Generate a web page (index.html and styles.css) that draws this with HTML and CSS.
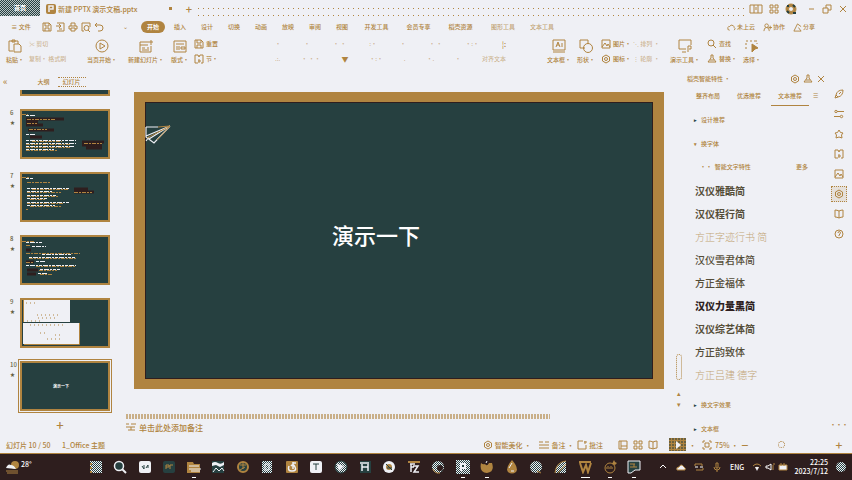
FILE: index.html
```html
<!DOCTYPE html>
<html lang="zh-CN">
<head>
<meta charset="utf-8">
<title>新建 PPTX 演示文稿.pptx</title>
<link rel="stylesheet" href="styles.css">
</head>
<body>
<svg class="defs" aria-hidden="true">
  <defs>
    <pattern id="chk" width="2" height="2" patternUnits="userSpaceOnUse"><g stroke="none"><path fill="#264040" d="M0 0h2v2H0z"/><path fill="#eff0f5" d="M0 0h1v1H0zM1 1h1v1H1z"/></g></pattern>
    <symbol id="save" viewBox="0 0 10 10"><path d="M1 1h6l2 2v6H1zM3 1v3h4V1M3 9V6h4v3"/></symbol>
    <symbol id="export" viewBox="0 0 10 10"><path d="M2 1h7v8H2M1 4h4M4 2l2 2-2 2M4 7h3"/></symbol>
    <symbol id="print" viewBox="0 0 10 10"><path d="M3 4V1h4v3M3 7H1V4h8v3H7M3 6h4v3H3z"/></symbol>
    <symbol id="preview" viewBox="0 0 10 10"><path d="M3 9H1V1h8v4M7 8l2 2"/><circle cx="5.500" cy="6" r="2.500"/></symbol>
    <symbol id="undo" viewBox="0 0 10 10"><path d="M3 1 1 3l2 2M1 3h5q3 0 3 3T6 9H4"/></symbol>
    <symbol id="gear" viewBox="0 0 10 10"><path d="m5 1 3.500 2v4L5 9 1.500 7V3z"/><circle cx="5" cy="5" r="1.500"/></symbol>
    <symbol id="pin" viewBox="0 0 10 10"><path d="M4 1h2v3l3 4H1l3-4zM3 6h4"/></symbol>
    <symbol id="close" viewBox="0 0 10 10"><path d="m2 2 6 6M8 2 2 8"/></symbol>
    <symbol id="img" viewBox="0 0 10 10"><path d="M1 1h8v8H1zM1 8l3-4 2 3 1-2 2 3"/></symbol>
    <symbol id="book" viewBox="0 0 10 10"><path d="M5 2v7M5 2Q3 1 1 1v7q2 0 4 1 2-1 4-1V1Q7 1 5 2"/></symbol>
    <symbol id="grid" viewBox="0 0 10 10"><path d="M1 1h3v3H1zM6 1h3v3H6zM1 6h3v3H1zM6 6h3v3H6z"/></symbol>
    <symbol id="cloud" viewBox="0 0 10 10"><path d="M3 8Q0 8 1 5q1-2 2-1 1-3 4-1 1 1 1 2 2 1 0 3"/></symbol>
    <symbol id="user" viewBox="0 0 10 10"><circle cx="4" cy="3" r="2"/><path d="M1 9q0-4 3-4t3 4M8 3v4M6 5h4"/></symbol>
    <symbol id="share" viewBox="0 0 10 10"><path d="M5 1 1 9h8L6 5M5 1l4 3"/></symbol>
    <symbol id="find" viewBox="0 0 10 10"><circle cx="4" cy="4" r="3"/><path d="m6 6 3 3"/></symbol>
    <symbol id="star" viewBox="0 0 10 10"><path d="m5 1 1.500 2.500L9 4 7.500 6 8 9 5 8 2 9l.5-3L1 4l2.500-.5z"/></symbol>
    <symbol id="sliders" viewBox="0 0 10 10"><path d="M3 2.500h7M0 7.500h6"/><circle cx="2" cy="2.500" r="1.200"/><circle cx="7.500" cy="7.500" r="1.200"/></symbol>
    <symbol id="rocket" viewBox="0 0 10 10"><path d="M2 6q1-5 7-5 0 6-5 7zM2 6 1 9l3-1M5 5l2-2"/></symbol>
    <symbol id="doc" viewBox="0 0 10 10"><path d="M1 9V1h3l1 2 1-2h3v8H7M1 9h3M4 7h3M5 5v4"/></symbol>
    <symbol id="help" viewBox="0 0 10 10"><circle cx="5" cy="5" r="4"/><path d="M4 4q0-1.500 1.500-1.500T6 5L5 6v1"/></symbol>
  </defs>
</svg>

<header class="titlebar">
  <button class="home">首页</button>
  <div class="doc-tab">
    <svg class="p-logo" viewBox="0 0 10 10"><rect width="10" height="10" rx="2" fill="#b08440"/><path d="M3 8V2h4v3H4" fill="none" stroke="#eff0f5" stroke-width="1.500"/></svg>
    <span class="doc-name">新建 PPTX 演示文稿.pptx</span><i class="dot"></i>
  </div>
  <button class="new-tab" aria-label="新建标签">+</button>
  <div class="dots-fill"></div>
  <div class="window-tools">
    <button aria-label="分屏"><svg class="wide" viewBox="0 0 14 10"><path d="M1 1h12v8H1zM5 1v8M9 1v8M7 3v3"/></svg></button>
    <button aria-label="应用"><svg><use href="#grid"/></svg></button>
    <button aria-label="账户"><svg class="avatar" viewBox="0 0 12 12"><circle cx="6" cy="6" r="5" fill="#b08440"/><circle cx="6" cy="6" r="2.500" fill="#eff0f5"/><path d="M2 3h2M8 2l2 2M2 8l2 2M8 10h3" stroke="#264040" stroke-width="2"/></svg></button>
    <button aria-label="最小化"><svg viewBox="0 0 10 10"><path d="M3 5h5"/></svg></button>
    <button aria-label="还原"><svg viewBox="0 0 10 10"><path d="M1 4h5v5H1zM4 4V1h5v5H6"/></svg></button>
    <button aria-label="关闭"><svg><use href="#close"/></svg></button>
  </div>
</header>

<nav class="menu">
  <button class="file">≡ 文件</button>
  <div class="quick">
    <button aria-label="保存"><svg><use href="#save"/></svg></button>
    <button aria-label="输出"><svg><use href="#export"/></svg></button>
    <button aria-label="打印"><svg><use href="#print"/></svg></button>
    <button aria-label="预览"><svg><use href="#preview"/></svg></button>
    <button aria-label="撤销"><svg><use href="#undo"/></svg></button>
    <button class="more" aria-label="更多">⌄</button>
  </div>
  <div class="tabs">
    <button class="active">开始</button><button>插入</button><button>设计</button><button>切换</button><button>动画</button><button>放映</button><button>审阅</button><button>视图</button><button class="long">开发工具</button><button class="long">会员专享</button><button class="long">稻壳资源</button><button class="context">图形工具</button><button class="context">文本工具</button>
  </div>
  <div class="share">
    <button><svg><use href="#cloud"/></svg>未上云</button>
    <button><svg><use href="#user"/></svg>协作</button>
    <button><svg><use href="#share"/></svg>分享</button>
  </div>
</nav>

<section class="ribbon">
  <button class="tool"><svg viewBox="0 0 14 14"><path d="M5 12H1V2h9v3M4 1h3v2H4zM6 5h5l2 2v6H6z"/></svg>粘贴·</button>
  <div class="stack faint"><button>✂ 剪切</button><button>复制· 格式刷</button></div>
  <button class="tool"><svg viewBox="0 0 14 14"><circle cx="7" cy="7" r="6"/><path d="M5 4v6l5-3z"/></svg>当页开始·</button>
  <button class="tool"><svg viewBox="0 0 14 14"><path d="M9 3H1v10h11V7M1 6h8M12 1v5M9 3h5M3 9h3M8 9h2M3 11h7"/></svg>新建幻灯片·</button>
  <button class="tool"><svg viewBox="0 0 14 14"><path d="M1 2h12v11H1zM3 5h8M3 8h4M3 10h4M8 8h4v2H8z"/></svg>版式·</button>
  <div class="stack"><button><svg><use href="#save"/></svg>重置</button><button><svg><use href="#doc"/></svg>节·</button></div>
  <div class="format faint">
    <div><span>·</span><span>·</span><span>· ·</span><span>:·</span><span>·</span><span>· ·</span><span>·:·</span><span class="strong">¦:</span></div>
    <div><span>.:.</span><span>· ··</span><button class="strong" aria-label="文字颜色">▼</button><span>·:·</span><span>.</span><span>·.</span><span>·</span><span>对齐文本</span></div>
  </div>
  <button class="tool"><svg viewBox="0 0 14 14"><path d="M1 1h12v10H1zM1 13h12M4 8l2-5 2 5M5 6h2M10 4v4"/></svg>文本框·</button>
  <button class="tool"><svg viewBox="0 0 14 14"><path d="M6 9H1V1h8v4"/><circle cx="9" cy="9" r="4.500"/></svg>形状·</button>
  <div class="stack"><button><svg><use href="#img"/></svg>图片·</button><button><svg><use href="#gear"/></svg>图标·</button></div>
  <div class="stack faint"><button>⋱ 排列 ·</button><button>⋮ 轮廓 ·</button></div>
  <button class="tool"><svg viewBox="0 0 14 14"><path d="M8 10H1V1h12v5M4 13h4M10 13V7h3v3h-2"/></svg>演示工具·</button>
  <div class="stack"><button><svg><use href="#find"/></svg>查找</button><button><svg><use href="#pin"/></svg>替换·</button></div>
  <button class="tool"><svg viewBox="0 0 14 14"><path d="M1 2h2M5 2h2M9 2h3M1 4v2M1 8v2M12 4v1" /><path d="m7 5 6 4-3 1-3 3z" fill="#b08440"/></svg>选择·</button>
</section>

<main class="workspace">
  <aside class="outline">
    <div class="outline-head"><button aria-label="收起">«</button><button class="push">大纲</button><button class="chosen">幻灯片</button></div>
    <ol class="thumbs">
      <li><div class="thumb cut"></div></li>
      <li><span class="no">6<b>★</b></span><div class="thumb"><svg viewBox="0 0 86 46"><g stroke="#2e1e1e" stroke-width="3"><path d="M4 8h38M4 11h12M4 14h17M6 19h26M8 26h12M60 31h22M60 34h20M64 37h16"/></g><g class="w"><path d="M4 4.500h9M4 23.500h10M4 29.500h50M4 32.500h50M4 35.500h48M4 38.500h28"/></g><g class="o"><path d="M0 3.500h6M5 8.500h28M5 12.500h10M7 18.500h18M10 30.500h30M4 33.500h44M4 36.500h44M4 39.500h32M62 32.500h18"/></g></svg></div></li>
      <li><span class="no">7<b>★</b></span><div class="thumb"><svg viewBox="0 0 86 46"><g stroke="#2e1e1e" stroke-width="3"><path d="M52 15h14M52 18h20"/></g><g class="w"><path d="M4 4.500h7M5 14.500h42M5 17.500h26M5 21.500h30M5 24.500h20M5 28.500h42M5 31.500h28"/></g><g class="o"><path d="M0 3.500h8M5 8.500h24M10 15.500h36M5 18.500h34M5 22.500h32M8 25.500h16M5 29.500h36M8 32.500h32M52 18.500h18M4 35.500h2"/></g></svg></div></li>
      <li><span class="no">8<b>★</b></span><div class="thumb"><svg viewBox="0 0 86 46"><g stroke="#2e1e1e" stroke-width="3"><path d="M4 13h5M4 25h8M5 33h11M5 37h9"/></g><g class="w"><path d="M4 5.500h16M10 9.500h14M20 17.500h30M7 20.500h46M14 24.500h9M4 28.500h50M18 32.500h20M16 36.500h10"/></g><g class="o"><path d="M0 4.500h12M4 8.500h4M4 16.500h54M7 21.500h48M4 25.500h7M14 29.500h40M17 33.500h18M18 37.500h12"/></g></svg></div></li>
      <li><span class="no">9<b>★</b></span><div class="thumb"><svg viewBox="0 0 86 46"><path fill="#eff0f5" stroke="none" d="M1 0h47v22H1zM1 23h57v21H1z"/><path d="M1.500 0v22M2 44.500h55.500V23"/><g stroke-dasharray="1 3"><path d="M4 3h10M15 15h22M16 18h20M5 21h14M8 25h34M18 33h8M33 35h8M25 39h16"/></g></svg></div></li>
      <li><span class="no">10<b>★</b></span><div class="thumb current"><span>演示一下</span></div></li>
    </ol>
    <button class="add" aria-label="新建幻灯片">+</button>
  </aside>

  <section class="stage">
    <div class="slide">
      <svg class="plane" viewBox="0 0 27 20"><g fill="none" stroke="#eff0f5" stroke-width="1.200"><path d="M1 2h12M25 1 1 11M25 1 9 18l-8-6V2M1 16l3-4M23 2 4 14"/></g><path d="M13 2 25 1 2 13M25 1 12 15" fill="none" stroke="#b08440"/></svg>
      <h1>演示一下</h1>
    </div>
    <div class="hscroll"></div>
    <label class="notes"><svg viewBox="0 0 10 10"><path d="M0 2h3M5 2h5M0 5h9M2 8h7M5 5v3"/></svg><input value="单击此处添加备注" aria-label="备注"></label>
  </section>

  <div class="vscroll"><i></i><button aria-label="上一页">▴</button><button aria-label="下一页">▾</button></div>

  <aside class="panel">
    <div class="panel-head"><h2>稻壳智能特性 ·</h2><button aria-label="设置"><svg><use href="#gear"/></svg></button><button aria-label="固定"><svg><use href="#pin"/></svg></button><button aria-label="关闭"><svg><use href="#close"/></svg></button></div>
    <div class="panel-tabs"><button>整齐布局</button><button>优选推荐</button><button class="on">文本推荐</button><button class="list" aria-label="列表">☰</button></div>
    <button class="fold"><b>▸</b>设计推荐</button>
    <button class="fold open"><b>▾</b>换字体</button>
    <div class="sub"><span>··&nbsp; 智能文字特性</span><a href="#more">更多</a></div>
    <ul class="fonts">
      <li class="bold">汉仪雅酷简</li>
      <li class="bold">汉仪程行简</li>
      <li class="thin">方正字迹行书 简</li>
      <li>汉仪雪君体简</li>
      <li>方正金福体</li>
      <li class="black">汉仪力量黑简</li>
      <li class="bold">汉仪综艺体简</li>
      <li>方正韵致体</li>
      <li class="thin">方正吕建 德字</li>
    </ul>
    <button class="fold"><b>▸</b>换文字效果</button>
    <button class="fold"><b>▸</b>文本框</button>
  </aside>

  <nav class="rail">
    <button aria-label="快捷"><svg><use href="#rocket"/></svg></button>
    <button aria-label="属性"><svg><use href="#sliders"/></svg></button>
    <button aria-label="动画"><svg><use href="#star"/></svg></button>
    <button aria-label="模板"><svg><use href="#doc"/></svg></button>
    <button aria-label="图片"><svg><use href="#img"/></svg></button>
    <button class="lit" aria-label="智能特性"><svg><use href="#gear"/></svg></button>
    <button aria-label="素材"><svg><use href="#book"/></svg></button>
    <button aria-label="帮助"><svg><use href="#help"/></svg></button>
    <button class="dots" aria-label="更多">···</button>
  </nav>
</main>

<footer class="status">
  <span class="page">幻灯片 10 / 50</span><span class="theme">1_Office 主题</span>
  <button class="beauty"><svg><use href="#gear"/></svg>智能美化 ·</button>
  <button class="note"><svg viewBox="0 0 10 10"><path d="M0 2h4M6 2h4M0 5h10M0 8h10"/></svg>备注 ·</button>
  <button class="note"><svg viewBox="0 0 10 10"><path d="M6 1H1v8h8V5M7 2h3M8 1v3"/></svg>批注</button>
  <div class="views">
    <button aria-label="普通视图"><svg viewBox="0 0 10 10"><path d="M1 1h8v8H1zM3 1v8M3 6h6"/></svg></button>
    <button aria-label="浏览视图"><svg><use href="#grid"/></svg></button>
    <button aria-label="阅读视图"><svg><use href="#book"/></svg></button>
  </div>
  <button class="play" aria-label="放映"><svg viewBox="0 0 10 10"><path d="M3 1v8l5-4z" fill="#eff0f5" stroke="none"/></svg></button><span>·</span>
  <div class="zoom"><button aria-label="适应窗口"><svg viewBox="0 0 10 10"><path d="M1 3V1h2M7 1h2v2M9 7v2H7M3 9H1V7M3 3h4v4H3z"/></svg></button><span class="pct">75% ·</span><button class="sign" aria-label="缩小">−</button><input type="range" min="0" max="100" value="35" aria-label="缩放"><button class="sign" aria-label="放大">+</button></div>
</footer>

<footer class="taskbar">
  <button class="weather"><svg viewBox="0 0 16 14"><circle cx="10" cy="5" r="4" fill="#b08440"/><path d="M1 8q2-5 5-3 3 0 5 4z" fill="#eff0f5"/><path d="M1 11h12M2 13h11" stroke="#b08440"/></svg>28°</button>
  <div class="apps">
    <button aria-label="开始"><svg viewBox="0 0 14 14"><path fill="url(#chk)" d="M1 1h12v12H1z"/><path d="M1 4h2M1 8h2M1 12h2" stroke="#b08440" stroke-width="2"/></svg></button>
    <button aria-label="搜索"><svg viewBox="0 0 14 14"><circle cx="6" cy="6" r="4.500" fill="#264040" stroke="#eff0f5" stroke-width="1.500"/><path d="m9 9 4 4" stroke="#eff0f5" stroke-width="2"/></svg></button>
    <button aria-label="笔记"><svg viewBox="0 0 14 14"><rect x="1" y="1" width="12" height="12" rx="2" fill="#eff0f5"/><path d="m4 6 2 3V5m2 3 2-3v3" stroke="#264040" fill="none"/></svg></button>
    <button aria-label="视频剪辑"><svg viewBox="0 0 14 14"><rect x="1" y="1" width="12" height="12" rx="2" fill="#264040"/><path d="M4 9V5h3v2H4M8 9V5h3" stroke="#b08440" fill="none"/></svg></button>
    <button class="run" aria-label="文件夹"><svg viewBox="0 0 14 14"><path fill="#b08440" d="M0 2h6l1 2h6v9H0z"/><path d="M2 6h10M2 9h12M4 11h9" stroke="#eff0f5"/></svg></button>
    <button aria-label="相册"><svg viewBox="0 0 14 14"><rect x="1" y="1" width="12" height="12" fill="#264040"/><path d="M1 3q3-2 6 0t6-1v3L9 7 5 5 1 6z" fill="#eff0f5"/><path d="m2 12 3-4 3 3 3-3 2 3" stroke="#eff0f5" fill="none"/></svg></button>
    <button aria-label="浏览器"><svg viewBox="0 0 14 14"><circle cx="7" cy="7" r="5" fill="#264040" stroke="#b08440" stroke-width="2"/><path d="M4 5h6M7 3v6M4 10l5-3" stroke="#b08440"/></svg></button>
    <button aria-label="编辑器"><svg viewBox="0 0 14 14"><path fill="url(#chk)" d="M2 1h10v12H2z"/><path d="M5 4h4v6H5z" fill="none" stroke="#eff0f5"/></svg></button>
    <button aria-label="音乐"><svg viewBox="0 0 14 14"><rect x="1" y="1" width="12" height="12" rx="1" fill="#b08440"/><path d="M8 2v7M8 3h3M4 6q-2 5 3 5t3-4-4-1" stroke="#eff0f5" fill="none" stroke-width="1.500"/></svg></button>
    <button aria-label="文本"><svg viewBox="0 0 14 14"><rect x="1" y="1" width="12" height="12" rx="2" fill="#eff0f5"/><path d="M4 4h6M7 4v6" stroke="#264040"/></svg></button>
    <button aria-label="播放"><svg viewBox="0 0 14 14"><circle cx="7" cy="7" r="6" fill="url(#chk)" stroke="#264040"/><path d="m3 4 7 2-5 5" fill="#eff0f5"/></svg></button>
    <button aria-label="管理"><svg viewBox="0 0 14 14"><rect x="2" y="1" width="11" height="12" fill="#264040"/><path d="M4 4v7M10 4v7M4 7h6M2 3h9" stroke="#eff0f5" stroke-width="1.500"/></svg></button>
    <button aria-label="影像"><svg viewBox="0 0 14 14"><circle cx="7" cy="7" r="6" fill="#eff0f5"/><circle cx="7" cy="7" r="3" fill="#b08440"/><path d="m4 4 6 6M5 8h5" stroke="#264040"/></svg></button>
    <button aria-label="传输"><svg viewBox="0 0 14 14"><path fill="#b08440" d="M1 1h12v2H1z"/><path d="M3 4h5M4 4v8M4 7h3M6 6h5l-4 6h5" fill="none" stroke="#eff0f5" stroke-width="1.500"/></svg></button>
    <button aria-label="浏览"><svg viewBox="0 0 14 14"><circle cx="7" cy="7" r="6" fill="url(#chk)"/><circle cx="9" cy="8" r="3" fill="#2e1e1e"/><path d="M2 9q2 5 7 4" stroke="#b08440" fill="none"/></svg></button>
    <button class="run" aria-label="程序"><svg viewBox="0 0 14 14"><path fill="url(#chk)" d="M0 0h14v14H0z"/><path d="M5 11V4h4v4H5" stroke="#eff0f5" stroke-width="2" fill="#264040"/></svg></button>
    <button class="run" aria-label="狐狸"><svg viewBox="0 0 14 14"><path d="M1 3q2 2 4 1 2 3 4-1l3 0q3 9-5 10Q-1 13 1 3" fill="#b08440"/><path d="m6 3 1-2" stroke="#eff0f5"/></svg></button>
    <button aria-label="水滴"><svg viewBox="0 0 14 14"><path d="M7 0q7 8 4 12-4 3-8 0Q0 8 7 0" fill="#b08440"/><path d="m7 3-3 5M6 11h3" stroke="#eff0f5"/></svg></button>
    <button aria-label="消息"><svg viewBox="0 0 14 14"><circle cx="7" cy="7" r="6" fill="url(#chk)"/><path d="m8 11 4 2" stroke="#b08440"/></svg></button>
    <button aria-label="数据"><svg viewBox="0 0 14 14"><path d="M1 13Q2 2 12 1v12z" fill="url(#chk)"/><path d="M1 13Q2 2 12 1M4 13l8-9" stroke="#b08440" fill="none"/></svg></button>
    <button class="run on" aria-label="WPS"><svg viewBox="0 0 14 14"><path d="M1 2h12M2 3l3 9 3-7 2 7 3-9" fill="none" stroke="#b08440" stroke-width="2"/></svg></button>
    <button class="run" aria-label="录屏"><svg viewBox="0 0 14 14"><circle cx="7" cy="8" r="5" fill="#2e1e1e" stroke="#b08440"/><path d="M3 8h7M5 6v1M8 6v1" stroke="#b08440"/><path d="m11 0 1 2 2 1-2 2-3-1z" fill="#b08440"/></svg></button>
    <button class="run" aria-label="截图"><svg viewBox="0 0 14 14"><path d="M1 1h12v9H8l-4 3H1z" fill="#264040" stroke="#eff0f5"/><path d="M3 4h5M7 4v3M3 7h7" stroke="#b08440"/></svg></button>
  </div>
  <div class="tray">
    <button aria-label="隐藏的图标"><svg viewBox="0 0 10 10"><path class="lt" d="m2 6 3-3 3 3"/></svg></button>
    <button aria-label="云盘"><svg viewBox="0 0 10 10"><path d="M1 8Q0 5 3 5q2-4 5 0 2 1 1 3z" fill="#eff0f5" stroke="#b08440"/></svg></button>
    <button aria-label="同步"><svg viewBox="0 0 10 10"><path d="M1 4V2h7v2M2 8h7V6"/><path class="lt" d="M1 5h3M6 5h3"/></svg></button>
    <button aria-label="麦克风"><svg viewBox="0 0 10 10"><path d="M4 1h2v5H4zM2 5q0 3 3 3t3-3M5 8v2"/></svg></button>
    <span class="lang">ENG</span>
    <button aria-label="网络"><svg viewBox="0 0 10 10"><path d="M1 4q4-4 8 0M3 6q2-2 4 0"/><path d="m3 5 2 4 2-4z" fill="#eff0f5" stroke="none"/></svg></button>
    <button aria-label="音量"><svg viewBox="0 0 10 10"><path class="lt" d="M1 4h2l3-2v6L3 6H1z"/><path d="M8 3v5M9 1v2"/></svg></button>
    <button aria-label="电池"><svg viewBox="0 0 10 10"><path d="M1 3h8v5H1z" fill="#eff0f5"/><path d="M3 1v3M6 1v3"/></svg></button>
    <time datetime="2023-07-12T22:25">22:25<br>2023/7/12</time>
    <button aria-label="通知"><svg viewBox="0 0 10 10"><circle cx="5" cy="5" r="5" fill="url(#chk)" stroke="none"/></svg></button>
  </div>
</footer>
</body>
</html>
```

FILE: styles.css
```css
:root {
  --paper: #eff0f5;
  --gold: #b08440;
  --board: #264040;
  --dark: #2e1e1e;
}

* { box-sizing: border-box; }

body {
  margin: 0;
  min-height: 100vh;
  display: flex;
  flex-direction: column;
  background: var(--paper);
  color: var(--gold);
  font: 6px/8px "Noto Sans CJK SC", "Noto Sans", sans-serif;
  font-weight: 500;
  overflow: hidden;
}

button, input {
  margin: 0;
  padding: 0;
  border: 0;
  background: none;
  color: inherit;
  font: inherit;
  white-space: nowrap;
}

button { display: flex; align-items: center; justify-content: center; }
h1, h2, ul, ol { margin: 0; padding: 0; font: inherit; list-style: none; }
a { color: inherit; text-decoration: none; }
svg { width: 10px; height: 10px; flex: none; fill: none; stroke: var(--gold); }
.defs { position: absolute; width: 0; height: 0; }

/* Title bar */
.titlebar { display: flex; align-items: center; height: 17px; }
.home {
  width: 40px;
  height: 16px;
  align-self: flex-start;
  color: white;
  font-weight: bold;
  background: repeating-conic-gradient(var(--board) 0 25%, #b9c3c5 0 50%) 0 0 / 2px 2px;
}
.doc-tab { display: flex; align-items: center; gap: 2px; width: 132px; padding-left: 6px; font-size: 7px; }
.p-logo { stroke: none; }
.dot { width: 3px; height: 3px; margin-left: auto; background: var(--gold); }
.new-tab { width: 34px; font-size: 11px; }
.dots-fill {
  flex: 1;
  height: 17px;
  margin-left: -10px;
  background:
    repeating-linear-gradient(90deg, transparent 0 2px, var(--gold) 2px 3px, transparent 3px 5px) 0 8px / 100% 1px no-repeat,
    repeating-linear-gradient(90deg, transparent 0 2px, var(--gold) 2px 3px, transparent 3px 5px) 0 15px / 100% 1px no-repeat;
}
.window-tools { display: flex; align-items: center; gap: 6px; padding: 0 4px 0 5px; }
.window-tools .wide { width: 14px; }
.window-tools .avatar { width: 12px; height: 12px; margin-right: 3px; }

/* Menu row */
.menu { display: flex; align-items: center; height: 20px; }
.file { width: 42px; }
.quick { display: flex; gap: 3px; width: 99px; }
.more { margin-left: 16px; }
.tabs { display: flex; gap: 15px; padding-left: 6px; }
.tabs .active { height: 12px; margin: 0 -6px; padding: 0 6px; border-radius: 6px; background: var(--gold); color: white; font-weight: bold; }
.tabs .long { width: 27px; }
.tabs .context { width: 28px; opacity: .7; }
.tabs .context:last-child { margin-left: -4px; }
.share { display: flex; gap: 8px; margin-left: auto; padding-right: 37px; }
.share button { gap: 1px; }
.share svg { width: 9px; height: 9px; }

/* Ribbon */
.ribbon {
  display: grid;
  grid-template-columns: 18px 49px 38px 40px 18px 26px 1fr 24px 20px 27px 30px 34px 30px 20px;
  gap: 5px;
  height: 34px;
  padding: 1px 90px 6px 6px;
}
.tool { flex-direction: column; gap: 3px; }
.tool svg { width: 14px; height: 14px; }
.stack { display: flex; flex-direction: column; justify-content: space-between; align-items: flex-start; padding: 1px 0; }
.stack button { height: 10px; gap: 2px; }
.faint { color: rgb(176 132 64 / 55%); }
.format { display: flex; flex-direction: column; justify-content: space-between; padding: 2px 0; }
.format div { display: flex; justify-content: space-between; padding: 0 36px 0 50px; }
.format .strong { color: var(--gold); font-size: 7px; }

/* Workspace */
.workspace { flex: 1; display: flex; }
.outline { display: flex; flex-direction: column; width: 126px; }
.outline-head { display: flex; align-items: center; height: 19px; padding: 3px 0 0 3px; }
.outline-head .push { margin-left: 30px; }
.outline-head button:first-child { font-size: 9px; }
.outline-head .chosen { margin-left: 8px; padding: 0 5px; border: 1px dotted var(--gold); border-width: 1px 0; }
.thumbs { display: flex; flex-direction: column; gap: 13px; }
.thumbs li { display: flex; height: 50px; padding-left: 10px; }
.thumbs li:first-child { height: 6px; padding-left: 20px; }
.no { display: flex; flex-direction: column; width: 10px; color: #655f40; }
.no b { margin-top: 1px; font-size: 5px; }
.thumb { width: 90px; height: 50px; border: 2px solid var(--gold); background: var(--board); }
.thumb svg { display: block; width: 86px; height: 46px; }
.thumb .w { stroke: #eff0f5; stroke-dasharray: 3 1 5 1 2 1; }
.thumb .o { stroke-dasharray: 4 1 2 1; }
.thumb.cut { height: 6px; border-top: 0; }
.thumb.current { display: grid; place-items: center; padding-right: 8px; outline: 1px solid var(--gold); outline-offset: 1px; color: white; font-size: 4px; font-weight: bold; line-height: 5px; }
.add { width: 120px; height: 20px; margin-top: 4px; font-size: 13px; }

.stage { flex: 1; display: flex; flex-direction: column; padding-top: 21px; }
.slide {
  position: relative;
  display: grid;
  place-items: center;
  aspect-ratio: 530 / 297;
  margin: 0 8px;
  border: solid var(--gold);
  border-width: 10px 11px;
  background: var(--board);
  box-shadow: inset 0 0 0 1px var(--dark);
  color: white;
}
.slide h1 { padding: 0 46px 14px 0; font-size: 22px; line-height: 32px; }
.plane { position: absolute; left: 0; top: 23px; width: 27px; height: 20px; }
.hscroll { width: 424px; height: 5px; margin-top: 25px; background: radial-gradient(circle at 1px 1px, var(--gold) 0 1px, transparent 1px) 0 0 / 3px 2px; opacity: .6; }
.notes { display: flex; align-items: center; gap: 3px; height: 16px; font-size: 8px; }
.notes input { flex: 1; }

.vscroll { display: flex; flex-direction: column; align-items: center; width: 14px; padding-top: 283px; font-size: 7px; gap: 3px; }
.vscroll i { width: 6px; height: 26px; margin-bottom: 6px; border: 1px dotted var(--gold); border-radius: 3px; }

.panel { width: 140px; padding-left: 9px; }
.panel-head { display: flex; align-items: center; height: 15px; margin-left: -8px; gap: 3px; }
.panel-head h2 { flex: 1; }
.panel-tabs { display: flex; height: 20px; gap: 15px; }
.panel-tabs button { width: 26px; border-bottom: 1px solid transparent; }
.panel-tabs .on { width: 38px; margin: 0 -6px; border-color: var(--gold); }
.panel-tabs .list { width: 8px; margin-left: -7px; }
.fold { height: 24px; gap: 4px; margin-left: -1px; }
.fold b { width: 3px; color: var(--board); font-size: 5px; }
.fold.open b { color: var(--gold); }
.fold:last-child { height: 14px; margin-top: 5px; }
.panel-tabs + .fold { margin-top: 2px; }
.sub { display: flex; justify-content: space-between; align-items: center; height: 22px; padding: 0 18px 0 5px; }
.fonts { padding: 1px 0 7px; }
.fonts li { height: 23px; font-size: 10px; line-height: 23px; color: #554d38; }
.fonts .bold { font-weight: 700; }
.fonts .thin { color: var(--gold); font-weight: 300; opacity: .7; }
.fonts .black { color: var(--dark); font-weight: 900; }

.rail { display: flex; flex-direction: column; align-items: center; gap: 4px; width: 26px; padding: 15px 0 3px; }
.rail button { width: 16px; height: 16px; }
.rail .lit { border: 1px dotted var(--gold); background: rgb(176 132 64 / 15%); }
.rail .dots { margin-top: auto; font-weight: bold; }

/* Status bar */
.status { display: flex; align-items: center; height: 17px; padding: 0 6px; font-size: 7px; white-space: nowrap; }
.page { width: 56px; }
.theme { flex: 1; }
.status button { gap: 2px; }
.beauty { width: 49px; margin-right: 8px; }
.note { margin-right: 3px; }
.views { display: flex; gap: 5px; margin: 0 11px 0 12px; }
.status .play { width: 17px; height: 13px; background: radial-gradient(circle at 1px 1px, #6b6240 0 1px, var(--gold) 1px) 0 0 / 3px 3px; }
.status > span:last-of-type { width: 16px; padding-left: 3px; }
.zoom { display: flex; align-items: center; }
.pct { width: 26px; padding-left: 3px; }
.sign { width: 14px; font-size: 12px; }
.zoom input { width: 80px; height: 10px; appearance: none; }
.zoom input::-webkit-slider-thumb { appearance: none; width: 7px; height: 7px; border: 1px dotted var(--gold); border-radius: 50%; background: var(--paper); }

/* Task bar */
.taskbar { display: flex; align-items: center; height: 27px; border-top: 1px solid var(--gold); background: var(--dark); color: white; font-size: 7px; }
.weather { width: 89px; justify-content: flex-start; align-items: flex-start; padding-left: 5px; }
.weather svg { width: 16px; height: 14px; }
.weather svg, .apps svg { stroke: none; }
.apps { flex: 1; display: flex; justify-content: space-between; }
.apps button { width: 14px; height: 26px; }
.apps svg { width: 14px; height: 14px; }
.apps .run { flex-direction: column; gap: 3px; padding-top: 4px; }
.apps .run::after { content: ""; width: 4px; height: 1px; background: white; }
.apps .on::after { width: 9px; }
.tray { display: flex; align-items: center; gap: 8px; padding: 0 11px 0 17px; }
.tray button { width: 10px; }
.tray .lt { stroke: white; }
.lang { width: 14px; }
.tray .lang ~ button { margin-right: -5px; }
.tray time { width: 37px; line-height: 9px; text-align: right; }
```
